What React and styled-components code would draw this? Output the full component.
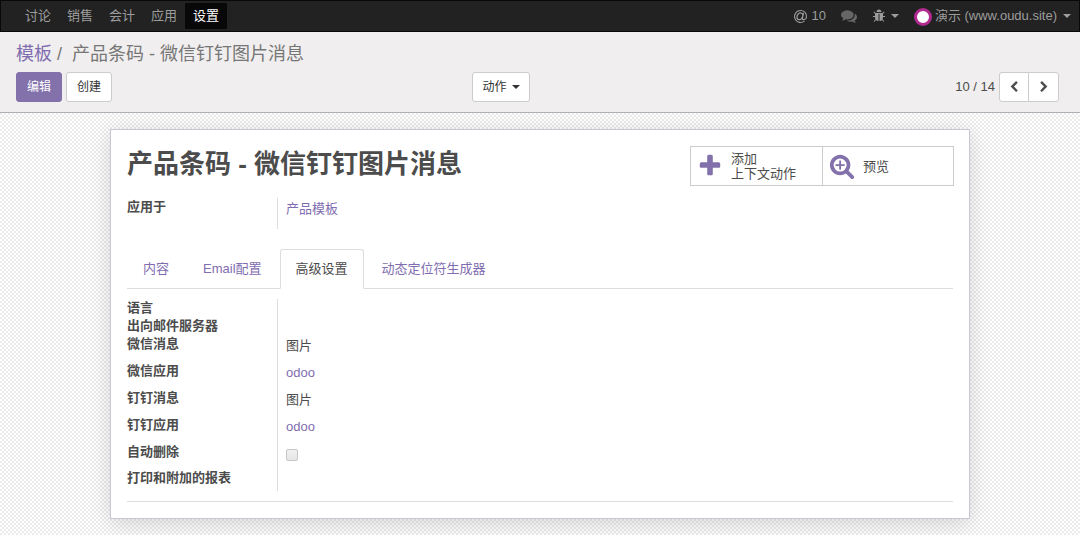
import React from 'react';
import styled, {createGlobalStyle} from 'styled-components';

const LINK = '#7f6db0';
const PURPLE = '#8371ab';

const GlobalStyle = createGlobalStyle`
    *, *::before, *::after {
        box-sizing: border-box;
    }

    body {
        margin: 0;
        color: #4c4c4c;
        background: #fff repeating-conic-gradient(#fff 0 25%, #ebebeb 0 50%) 0 1px / 4px 4px;
        font-family: "Liberation Sans", "Noto Sans CJK SC", sans-serif;
        font-size: 13px;
        line-height: 18px;
    }

    a {
        color: ${LINK};
        text-decoration: none;
    }

    button {
        font-family: inherit;
        cursor: pointer;
    }
`;

const Navbar = styled.nav`
    display: flex;
    justify-content: space-between;
    height: 32px;
    padding: 2px 8px 2px 16px;
    background: #222;
    border: 1px solid #080808;
`;

const NavGroup = styled.div`
    display: flex;
    align-items: center;
    gap: ${props => props.$gap || 0}px;
`;

const NavLink = styled.a`
    padding: 4px 8px;
    color: ${props => props.$active ? '#fff' : '#9d9d9d'};
    background: ${props => props.$active ? '#080808' : 'transparent'};
`;

const NavButton = styled.button`
    display: flex;
    align-items: center;
    gap: ${props => props.$gap || 4}px;
    padding: 0;
    border: 0;
    background: none;
    color: ${props => props.$muted ? '#666' : '#9d9d9d'};
    font-size: 13px;
    line-height: 18px;
`;

const Avatar = styled.span`
    width: 18px;
    height: 18px;
    margin-top: 2px;
    border: 3px solid #b02a8f;
    border-radius: 50%;
    background: #fff;
`;

const Caret = styled.span`
    width: 8px;
    height: 4px;
    margin-left: ${props => props.$space || 0}px;
    border: 4px solid transparent;
    border-top-color: currentColor;
    border-bottom: 0;
`;

const ControlPanel = styled.header`
    padding: 10px 21px 10px 16px;
    background: #f0eeee;
    border-bottom: 1px solid #afafb6;
`;

const Breadcrumb = styled.ol`
    display: flex;
    margin: 0 0 6px;
    padding: 0;
    list-style: none;
    color: #777;
    font-size: 18px;
    line-height: 24px;

    li + li::before {
        content: "/";
        padding: 0 10px 0 5px;
    }
`;

const Toolbar = styled.div`
    display: flex;
`;

const ToolbarHalf = styled.div`
    display: flex;
    width: 50%;
    align-items: center;
    justify-content: ${props => props.$end ? 'flex-end' : 'space-between'};
    padding-right: ${props => props.$end ? 0 : 8}px;
`;

const ButtonGroup = styled.div`
    display: flex;
    gap: 4px;
`;

const Button = styled.button`
    display: flex;
    align-items: center;
    gap: 5px;
    height: 30px;
    padding: 0 ${props => props.$slim ? 9 : 10}px;
    border: 1px solid ${props => props.$primary ? PURPLE : '#ccc'};
    border-radius: 3px;
    color: ${props => props.$primary ? '#fff' : '#333'};
    background: ${props => props.$primary ? PURPLE : '#fff'};
    font-size: 12px;
    line-height: 18px;
`;

const Pager = styled.div`
    display: flex;
    margin-left: 4px;

    ${Button} {
        width: 30px;
        justify-content: center;
        padding: 0;
        color: #4c4c4c;
    }

    ${Button}:first-child {
        border-radius: 3px 0 0 3px;
    }

    ${Button}:last-child {
        width: 31px;
        margin-left: -1px;
        border-radius: 0 3px 3px 0;
    }
`;

const Sheet = styled.main`
    max-width: 860px;
    margin: 16px auto;
    padding: 16px;
    background: #fff;
    border: 1px solid #c8c8d3;
    box-shadow: 0 4px 20px rgba(0, 0, 0, .15);
`;

const SheetHeader = styled.div`
    display: flex;
    justify-content: space-between;
`;

const Title = styled.h1`
    margin: 0;
    font-size: 26px;
    line-height: 36px;
`;

const StatBox = styled.div`
    display: flex;
    margin-right: -1px;
    border: 1px solid #ccc;
`;

const StatButton = styled.button`
    display: flex;
    align-items: center;
    gap: 8px;
    width: 131px;
    height: 38px;
    padding: 0 6px;
    border: 0;
    background: #fff;
    color: #4c4c4c;
    font-size: 13px;
    line-height: 15px;
    text-align: left;

    & + & {
        border-left: 1px solid #ccc;
    }

    svg {
        color: ${PURPLE};
    }
`;

const Group = styled.section`
    margin-top: ${props => props.$top}px;
`;

const Row = styled.div`
    display: flex;
    min-height: ${props => props.$height || 18}px;
`;

const Label = styled.label`
    width: 151px;
    border-right: 1px solid #ddd;
    font-weight: bold;
`;

const Value = styled.div`
    flex: 1;
    padding: 2px 8px 0;
`;

const Checkbox = styled.input`
    appearance: none;
    display: block;
    width: 12px;
    height: 12px;
    margin: 4px 0 0;
    border: 1px solid #c6c6c6;
    border-radius: 2px;
    background: linear-gradient(#f1f1f1, #e6e6e6);
`;

const Tabs = styled.div`
    display: flex;
    margin-top: 20px;
    border-bottom: 1px solid #ddd;
`;

const Tab = styled.button`
    height: 40px;
    margin: 0 2px -1px 0;
    padding: 0 15px;
    border: 1px solid ${props => props.$active ? '#ddd' : 'transparent'};
    border-bottom-color: ${props => props.$active ? '#fff' : 'transparent'};
    border-radius: 3px 3px 0 0;
    color: ${props => props.$active ? '#4c4c4c' : LINK};
    background: ${props => props.$active ? '#fff' : 'none'};
    font-size: 13px;
    line-height: 18px;
`;

const Divider = styled.hr`
    margin: 10px 0 0;
    border: 0;
    border-top: 1px solid #ddd;
`;

const ICONS = {
    at: 'M972 761q0-108-53.5-169t-147.5-61q-63 0-124 30.500t-110 84.500-79.500 137-30.500 180q0 112 53.500 173t150.500 61q96 0 176-66.500t122.500-166 42.500-203.500zm564 135q0 111-37 197t-98.500 135-131.500 74.500-145 27.500q-6 0-15.500.5t-16.500.5q-95 0-142-53-28-33-33-83-52 66-131.500 110t-173.500 44q-161 0-249.500-95.500t-88.500-269.500q0-157 66-290t179-210.500 246-77.500q87 0 155 35.500t106 99.500l2-19 11-56q1-6 5.500-12t9.500-6h118q5 0 13 11 5 5 3 16l-120 614q-5 24-5 48 0 39 12.500 52t44.500 13q28-1 57-5.500t73-24 77-50 57-89.500 24-137q0-292-174-466t-466-174q-130 0-248.500 51t-204 136.500-136.500 204-51 248.500 51 248.500 136.500 204 204 136.500 248.500 51q228 0 405-144 11-9 24-8t21 12l41 49q8 12 7 24-2 13-12 22-102 83-227.500 128t-258.500 45q-156 0-298-61t-245-164-164-245-61-298 61-298 164-245 245-164 298-61q344 0 556 212t212 556z',
    comments: 'M1408 768q0 139-94 257t-256.500 186.500-353.500 68.500q-86 0-176-16-124 88-278 128-36 9-86 16h-3q-11 0-20.500-8t-11.500-21q-1-3-1-6.500t.5-6.500 2-6l2.500-5 3.500-5.500 4-5 4.500-5 4-4.500q5-6 23-25t26-29.500 22.500-29 25-38.500 20.500-44q-124-72-195-177t-71-224q0-139 94-257t256.500-186.500 353.500-68.500 353.500 68.500 256.500 186.500 94 257zm384 256q0 120-71 224.500t-195 176.500q10 24 20.500 44t25 38.500 22.500 29 26 29.500 23 25q1 1 4 4.500t4.500 5 4 5 3.500 5.500l2.500 5 2 6 .5 6.500-1 6.500q-3 14-13 22t-22 7q-50-7-86-16-154-40-278-128-90 16-176 16-271 0-472-132 58 4 88 4 161 0 309-45t264-129q125-92 192-212t67-254q0-77-23-152 129 71 204 178t75 230z',
    bug: 'M1696 960q0 26-19 45t-45 19h-224q0 171-67 290l208 209q19 19 19 45t-19 45q-18 19-45 19t-45-19l-198-197q-5 5-15 13t-42 28.500-65 36.500-82 29-97 13v-896h-128v896q-51 0-101.500-13.500t-87-33-66-39-43.500-32.500l-15-14-183 207q-20 21-48 21-24 0-43-16-19-18-20.500-44.500t15.500-46.500l202-227q-58-114-58-274h-224q-26 0-45-19t-19-45 19-45 45-19h224v-294l-173-173q-19-19-19-45t19-45 45-19 45 19l173 173h844l173-173q19-19 45-19t45 19 19 45-19 45l-173 173v294h224q26 0 45 19t19 45zm-480-576h-640q0-133 93.500-226.500t226.500-93.500 226.500 93.500 93.500 226.500z',
    left: 'M1427 301l-531 531 531 531q19 19 19 45t-19 45l-166 166q-19 19-45 19t-45-19l-742-742q-19-19-19-45t19-45l742-742q19-19 45-19t45 19l166 166q19 19 19 45t-19 45z',
    right: 'M1363 877l-742 742q-19 19-45 19t-45-19l-166-166q-19-19-19-45t19-45l531-531-531-531q-19-19-19-45t19-45l166-166q19-19 45-19t45 19l742 742q19 19 19 45t-19 45z',
    plus: 'M1600 736v192q0 40-28 68t-68 28h-416v416q0 40-28 68t-68 28h-192q-40 0-68-28t-28-68v-416h-416q-40 0-68-28t-28-68v-192q0-40 28-68t68-28h416v-416q0-40 28-68t68-28h192q40 0 68 28t28 68v416h416q40 0 68 28t28 68z',
    searchPlus: 'M1088 800v64q0 13-9.500 22.500t-22.500 9.500h-224v224q0 13-9.500 22.500t-22.500 9.500h-64q-13 0-22.500-9.500t-9.500-22.500v-224h-224q-13 0-22.500-9.500t-9.500-22.500v-64q0-13 9.500-22.500t22.500-9.500h224v-224q0-13 9.500-22.500t22.500-9.500h64q13 0 22.500 9.500t9.500 22.500v224h224q13 0 22.500 9.500t9.500 22.500zm128 32q0-185-131.500-316.500t-316.500-131.500-316.500 131.500-131.500 316.500 131.500 316.500 316.500 131.500 316.500-131.500 131.500-316.500zm512 832q0 53-37.500 90.500t-90.500 37.500q-54 0-90-38l-343-342q-179 124-399 124-143 0-273.500-55.500t-225-150-150-225-55.500-273.500 55.500-273.500 150-225 225-150 273.500-55.500 273.500 55.500 225 150 150 225 55.500 273.500q0 220-124 399l343 343q37 37 37 90z'
};

const Icon = ({name, size}) => (
    <svg width={size} height={size} viewBox={name === 'at' ? '0 128 1536 1536' : '0 0 1792 1792'} fill="currentColor" aria-hidden="true">
        <path d={ICONS[name]}/>
    </svg>
);

const MENUS = ['讨论', '销售', '会计', '应用', '设置'];
const TABS = ['内容', 'Email配置', '高级设置', '动态定位符生成器'];

const FIELDS = [
    {id: 'lang', label: '语言'},
    {id: 'mail_server', label: '出向邮件服务器'},
    {id: 'wx_message', label: '微信消息', value: '图片', height: 27},
    {id: 'wx_app', label: '微信应用', value: 'odoo', link: true, height: 27},
    {id: 'ding_message', label: '钉钉消息', value: '图片', height: 27},
    {id: 'ding_app', label: '钉钉应用', value: 'odoo', link: true, height: 27},
    {id: 'auto_delete', label: '自动删除', checkbox: true, height: 26},
    {id: 'report', label: '打印和附加的报表', height: 22}
];

const Field = ({id, label, value, link, checkbox, height}) => (
    <Row $height={height}>
        <Label htmlFor={checkbox ? id : undefined}>{label}</Label>
        <Value>
            {checkbox && <Checkbox id={id} type="checkbox" disabled/>}
            {link ? <a href="#">{value}</a> : value}
        </Value>
    </Row>
);

const App = () => (
    <>
        <GlobalStyle/>
        <Navbar>
            <NavGroup>
                {MENUS.map(menu => (
                    <NavLink key={menu} href="#" $active={menu === '设置'}>{menu}</NavLink>
                ))}
            </NavGroup>
            <NavGroup $gap={15}>
                <NavButton type="button"><Icon name="at" size={13}/>10</NavButton>
                <NavButton type="button" $muted aria-label="Conversations"><Icon name="comments" size={16}/></NavButton>
                <NavButton type="button" $gap={5} aria-label="Debug"><Icon name="bug" size={14}/><Caret/></NavButton>
                <NavButton type="button" $gap={3}>
                    <Avatar/>
                    演示 (www.oudu.site)
                    <Caret $space={3}/>
                </NavButton>
            </NavGroup>
        </Navbar>
        <ControlPanel>
            <Breadcrumb>
                <li><a href="#">模板</a></li>
                <li>产品条码 - 微信钉钉图片消息</li>
            </Breadcrumb>
            <Toolbar>
                <ToolbarHalf>
                    <ButtonGroup>
                        <Button type="button" $primary>编辑</Button>
                        <Button type="button">创建</Button>
                    </ButtonGroup>
                    <Button type="button" $slim>动作<Caret/></Button>
                </ToolbarHalf>
                <ToolbarHalf $end>
                    <span>10 / 14</span>
                    <Pager>
                        <Button type="button" aria-label="Previous"><Icon name="left" size={12}/></Button>
                        <Button type="button" aria-label="Next"><Icon name="right" size={12}/></Button>
                    </Pager>
                </ToolbarHalf>
            </Toolbar>
        </ControlPanel>
        <Sheet>
            <SheetHeader>
                <Title>产品条码 - 微信钉钉图片消息</Title>
                <StatBox>
                    <StatButton type="button">
                        <Icon name="plus" size={26}/>
                        <span>添加<br/>上下文动作</span>
                    </StatButton>
                    <StatButton type="button">
                        <Icon name="searchPlus" size={26}/>
                        预览
                    </StatButton>
                </StatBox>
            </SheetHeader>
            <Group $top={12}>
                <Row $height={31}>
                    <Label>应用于</Label>
                    <Value><a href="#">产品模板</a></Value>
                </Row>
            </Group>
            <Tabs role="tablist">
                {TABS.map(tab => (
                    <Tab key={tab} type="button" role="tab" aria-selected={tab === '高级设置'} $active={tab === '高级设置'}>{tab}</Tab>
                ))}
            </Tabs>
            <Group $top={10}>
                {FIELDS.map(field => <Field key={field.id} {...field}/>)}
            </Group>
            <Divider/>
        </Sheet>
    </>
);

export default App;
